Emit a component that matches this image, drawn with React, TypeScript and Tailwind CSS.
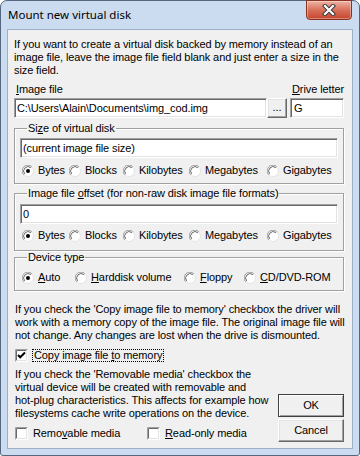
import type { ReactNode } from "react";

const ui = "font-['Liberation_Sans',Arial,sans-serif] text-[11px] leading-[13px] tracking-[-0.1px] text-black";

const sunken =
  "bg-white border border-t-[#a0a0a0] border-l-[#a0a0a0] border-r-white border-b-white shadow-[inset_1px_1px_0_#696969,inset_-1px_-1px_0_#e3e3e3]";

const raised =
  "bg-[#f0f0f0] border border-t-white border-l-white border-r-[#696969] border-b-[#696969] shadow-[inset_-1px_-1px_0_#a0a0a0,inset_1px_1px_0_#e3e3e3]";

function Radio({ checked }: { checked?: boolean }) {
  return (
    <svg width="12" height="12" viewBox="0 0 12 12" className="shrink-0">
      <circle cx="6" cy="6" r="5.5" fill="#fff" stroke="#e3e3e3" />
      <path d="M1.8 9.9 A5.5 5.5 0 0 1 9.9 1.8" fill="none" stroke="#a0a0a0" />
      <path d="M2.7 8.9 A4.4 4.4 0 0 1 8.9 2.7" fill="none" stroke="#696969" />
      {checked && <circle cx="6" cy="6" r="2" fill="#000" />}
    </svg>
  );
}

function Check({ checked }: { checked?: boolean }) {
  return (
    <svg width="13" height="13" viewBox="0 0 13 13" className="shrink-0">
      <rect x="0" y="0" width="13" height="13" fill="#fff" />
      <path d="M0.5 12.5 V0.5 H12.5" fill="none" stroke="#a0a0a0" />
      <path d="M1.5 11.5 V1.5 H11.5" fill="none" stroke="#696969" />
      <path d="M1.5 11.5 H11.5 V1.5" fill="none" stroke="#e3e3e3" />
      {checked && <path d="M3 6 L5.2 8.3 L10 3.5" fill="none" stroke="#000" strokeWidth="2" />}
    </svg>
  );
}

function Opt({ w, checked, children }: { w?: string; checked?: boolean; children: ReactNode }) {
  return (
    <div className={`flex items-center gap-[4px] ${w ?? ""}`}>
      <Radio checked={checked} />
      <span className="whitespace-nowrap">{children}</span>
    </div>
  );
}

function Group({ title, className, children }: { title: ReactNode; className?: string; children: ReactNode }) {
  return (
    <fieldset
      className={`border border-[#a0a0a0] shadow-[inset_1px_1px_0_#fff,1px_1px_0_#fff] px-[5px] ${className ?? ""}`}
    >
      <legend className="ml-[7px] px-[1px] whitespace-nowrap">{title}</legend>
      {children}
    </fieldset>
  );
}

const u = (s: string) => <span className="underline">{s}</span>;

export default function App() {
  return (
    <div className="w-[360px] h-[456px] bg-[#cbdcf0] border border-[#55677f] rounded-t-[7px] rounded-b-[3px] flex flex-col px-[6px] pb-[6px]">
      <div className="h-[28px] flex justify-between items-start">
        <div className="pl-[1px] pt-[6px] font-['Noto_Sans',sans-serif] text-[11.5px] leading-[16px] text-black">
          Mount new virtual disk
        </div>
        <div className="-mt-px mr-[1px] w-[46px] h-[20px] rounded-b-[4px] border border-[#8a3222] bg-linear-to-b from-[#eeb3a6] via-[#d8705a] to-[#c6452b] flex items-center justify-center shadow-[inset_0_0_0_1px_rgba(255,255,255,0.35)]">
          <svg width="14" height="12" viewBox="0 0 14 12">
            <path d="M3 2 L11 10 M11 2 L3 10" stroke="#3b3b3b" strokeWidth="4.2" strokeLinecap="square" />
            <path d="M3 2 L11 10 M11 2 L3 10" stroke="#fff" strokeWidth="2.2" strokeLinecap="square" />
          </svg>
        </div>
      </div>

      <div className={`flex-1 bg-[#f0f0f0] border border-[#9db0c8] pl-[6px] pr-[8px] pt-[8px] ${ui}`}>
        <p className="whitespace-nowrap">
          If you want to create a virtual disk backed by memory instead of an
          <br />
          image file, leave the image file field blank and just enter a size in the
          <br />
          size field.
        </p>

        <div className="mt-[6px] flex gap-[3px]">
          <div className="flex-1 flex flex-col">
            <span className="pl-[2px]">{u("I")}mage file</span>
            <div className="mt-[2px] flex h-[20px]">
              <div className={`flex-1 flex items-center pl-[2px] ${sunken}`}>C:\Users\Alain\Documents\img_cod.img</div>
              <div className={`w-[20px] flex items-end justify-center pb-[3px] ${raised}`}>...</div>
            </div>
          </div>
          <div className="w-[54px] flex flex-col">
            <span className="pl-[2px] whitespace-nowrap">{u("D")}rive letter</span>
            <div className={`mt-[2px] h-[20px] flex items-center pl-[3px] ${sunken}`}>G</div>
          </div>
        </div>

        <Group className="mt-[4px] pb-[6px]" title={<>Si{u("z")}e of virtual disk</>}>
          <div className={`mt-[3px] h-[20px] flex items-center pl-[2px] ${sunken}`}>(current image file size)</div>
          <div className="mt-[6px] flex pl-[2px]">
            <Opt w="w-[47px]" checked>Bytes</Opt>
            <Opt w="w-[54px]">Blocks</Opt>
            <Opt w="w-[66px]">Kilobytes</Opt>
            <Opt w="w-[78px]">Megabytes</Opt>
            <Opt>Gigabytes</Opt>
          </div>
        </Group>

        <Group className="mt-[3px] pb-[8px]" title={<>Image file {u("o")}ffset (for non-raw disk image file formats)</>}>
          <div className={`mt-[4px] h-[20px] flex items-center pl-[2px] ${sunken}`}>0</div>
          <div className="mt-[5px] flex pl-[2px]">
            <Opt w="w-[47px]" checked>Bytes</Opt>
            <Opt w="w-[54px]">Blocks</Opt>
            <Opt w="w-[66px]">Kilobytes</Opt>
            <Opt w="w-[78px]">Megabytes</Opt>
            <Opt>Gigabytes</Opt>
          </div>
        </Group>

        <Group className="pb-[6px]" title="Device type">
          <div className="mt-[7px] flex pl-[2px]">
            <Opt w="w-[53px]" checked>{u("A")}uto</Opt>
            <Opt w="w-[109px]">{u("H")}arddisk volume</Opt>
            <Opt w="w-[60px]">{u("F")}loppy</Opt>
            <Opt>{u("C")}D/DVD-ROM</Opt>
          </div>
        </Group>

        <p className="mt-[12px] whitespace-nowrap pl-[1px]">
          If you check the 'Copy image file to memory' checkbox the driver will
          <br />
          work with a memory copy of the image file. The original image file will
          <br />
          not change. Any changes are lost when the drive is dismounted.
        </p>

        <div className="mt-[7px] flex items-center gap-[4px] pl-[1px]">
          <Check checked />
          <span className="border border-dotted border-black px-[1px] leading-[11px]">
            Copy image file {u("t")}o memory
          </span>
        </div>

        <div className="flex">
          <div className="flex-1 pl-[1px]">
            <p className="mt-[6px] whitespace-nowrap">
              If you check the 'Removable media' checkbox the
              <br />
              virtual device will be created with removable and
              <br />
              hot-plug characteristics. This affects for example how
              <br />
              filesystems cache write operations on the device.
            </p>
            <div className="mt-[7px] flex items-center">
              <div className="w-[132px] flex items-center gap-[5px]">
                <Check />
                <span>Remo{u("v")}able media</span>
              </div>
              <div className="flex items-center gap-[5px]">
                <Check />
                <span>{u("R")}ead-only media</span>
              </div>
            </div>
          </div>
          <div className="w-[66px] pt-[32px] flex flex-col gap-[2px]">
            <div className="h-[23px] flex items-center justify-center bg-[#f0f0f0] border border-[#404040] shadow-[inset_1px_1px_0_#fff,inset_-1px_-1px_0_#a0a0a0]">
              OK
            </div>
            <div className={`h-[23px] flex items-center justify-center ${raised}`}>Cancel</div>
          </div>
        </div>
      </div>
    </div>
  );
}
